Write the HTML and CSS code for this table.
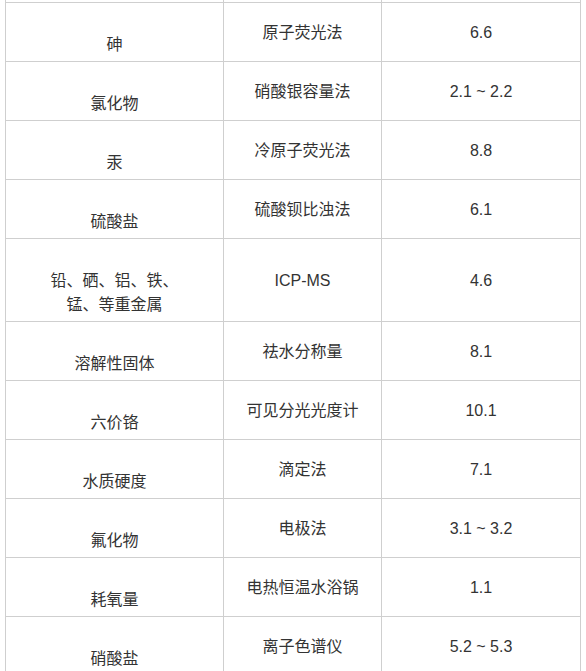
FILE: index.html
```html
<!DOCTYPE html>
<html lang="zh-CN">
<head>
<meta charset="utf-8">
<title>检测项目</title>
<link rel="stylesheet" href="styles.css">
</head>
<body>
<table class="data">
  <colgroup>
    <col class="c1"><col class="c2"><col class="c3">
  </colgroup>
  <tbody>
    <tr class="filler"><td></td><td></td><td></td></tr>
    <tr><td class="item">砷</td><td>原子荧光法</td><td>6.6</td></tr>
    <tr><td class="item">氯化物</td><td>硝酸银容量法</td><td>2.1 ~ 2.2</td></tr>
    <tr><td class="item">汞</td><td>冷原子荧光法</td><td>8.8</td></tr>
    <tr><td class="item">硫酸盐</td><td>硫酸钡比浊法</td><td>6.1</td></tr>
    <tr><td class="item">铅、硒、铝、铁、<br>锰、等重金属</td><td>ICP-MS</td><td>4.6</td></tr>
    <tr><td class="item">溶解性固体</td><td>祛水分称量</td><td>8.1</td></tr>
    <tr><td class="item">六价铬</td><td>可见分光光度计</td><td>10.1</td></tr>
    <tr><td class="item">水质硬度</td><td>滴定法</td><td>7.1</td></tr>
    <tr><td class="item">氟化物</td><td>电极法</td><td>3.1 ~ 3.2</td></tr>
    <tr><td class="item">耗氧量</td><td>电热恒温水浴锅</td><td>1.1</td></tr>
    <tr><td class="item">硝酸盐</td><td>离子色谱仪</td><td>5.2 ~ 5.3</td></tr>
  </tbody>
</table>
</body>
</html>
```
FILE: styles.css
```css
html, body {
  margin: 0;
  padding: 0;
  background: #fff;
}

body {
  font-family: "Liberation Sans", "Noto Sans CJK SC", sans-serif;
  font-size: 16px;
  color: #333;
  overflow: hidden;
}

.data {
  border-collapse: collapse;
  table-layout: fixed;
  width: 575px;
  margin-left: 5px;
}

.c1 { width: 218px; }
.c2 { width: 158px; }
.c3 { width: 199px; }

.data td {
  border: 1px solid #cfcfcf;
  padding: 6px 10px 4px;
  line-height: 24px;
  text-align: center;
  vertical-align: middle;
}

.data td.item {
  padding-top: 30px;
}

.data .filler td {
  height: 2px;
  padding: 0;
  line-height: 0;
  border-top: none;
}
```
